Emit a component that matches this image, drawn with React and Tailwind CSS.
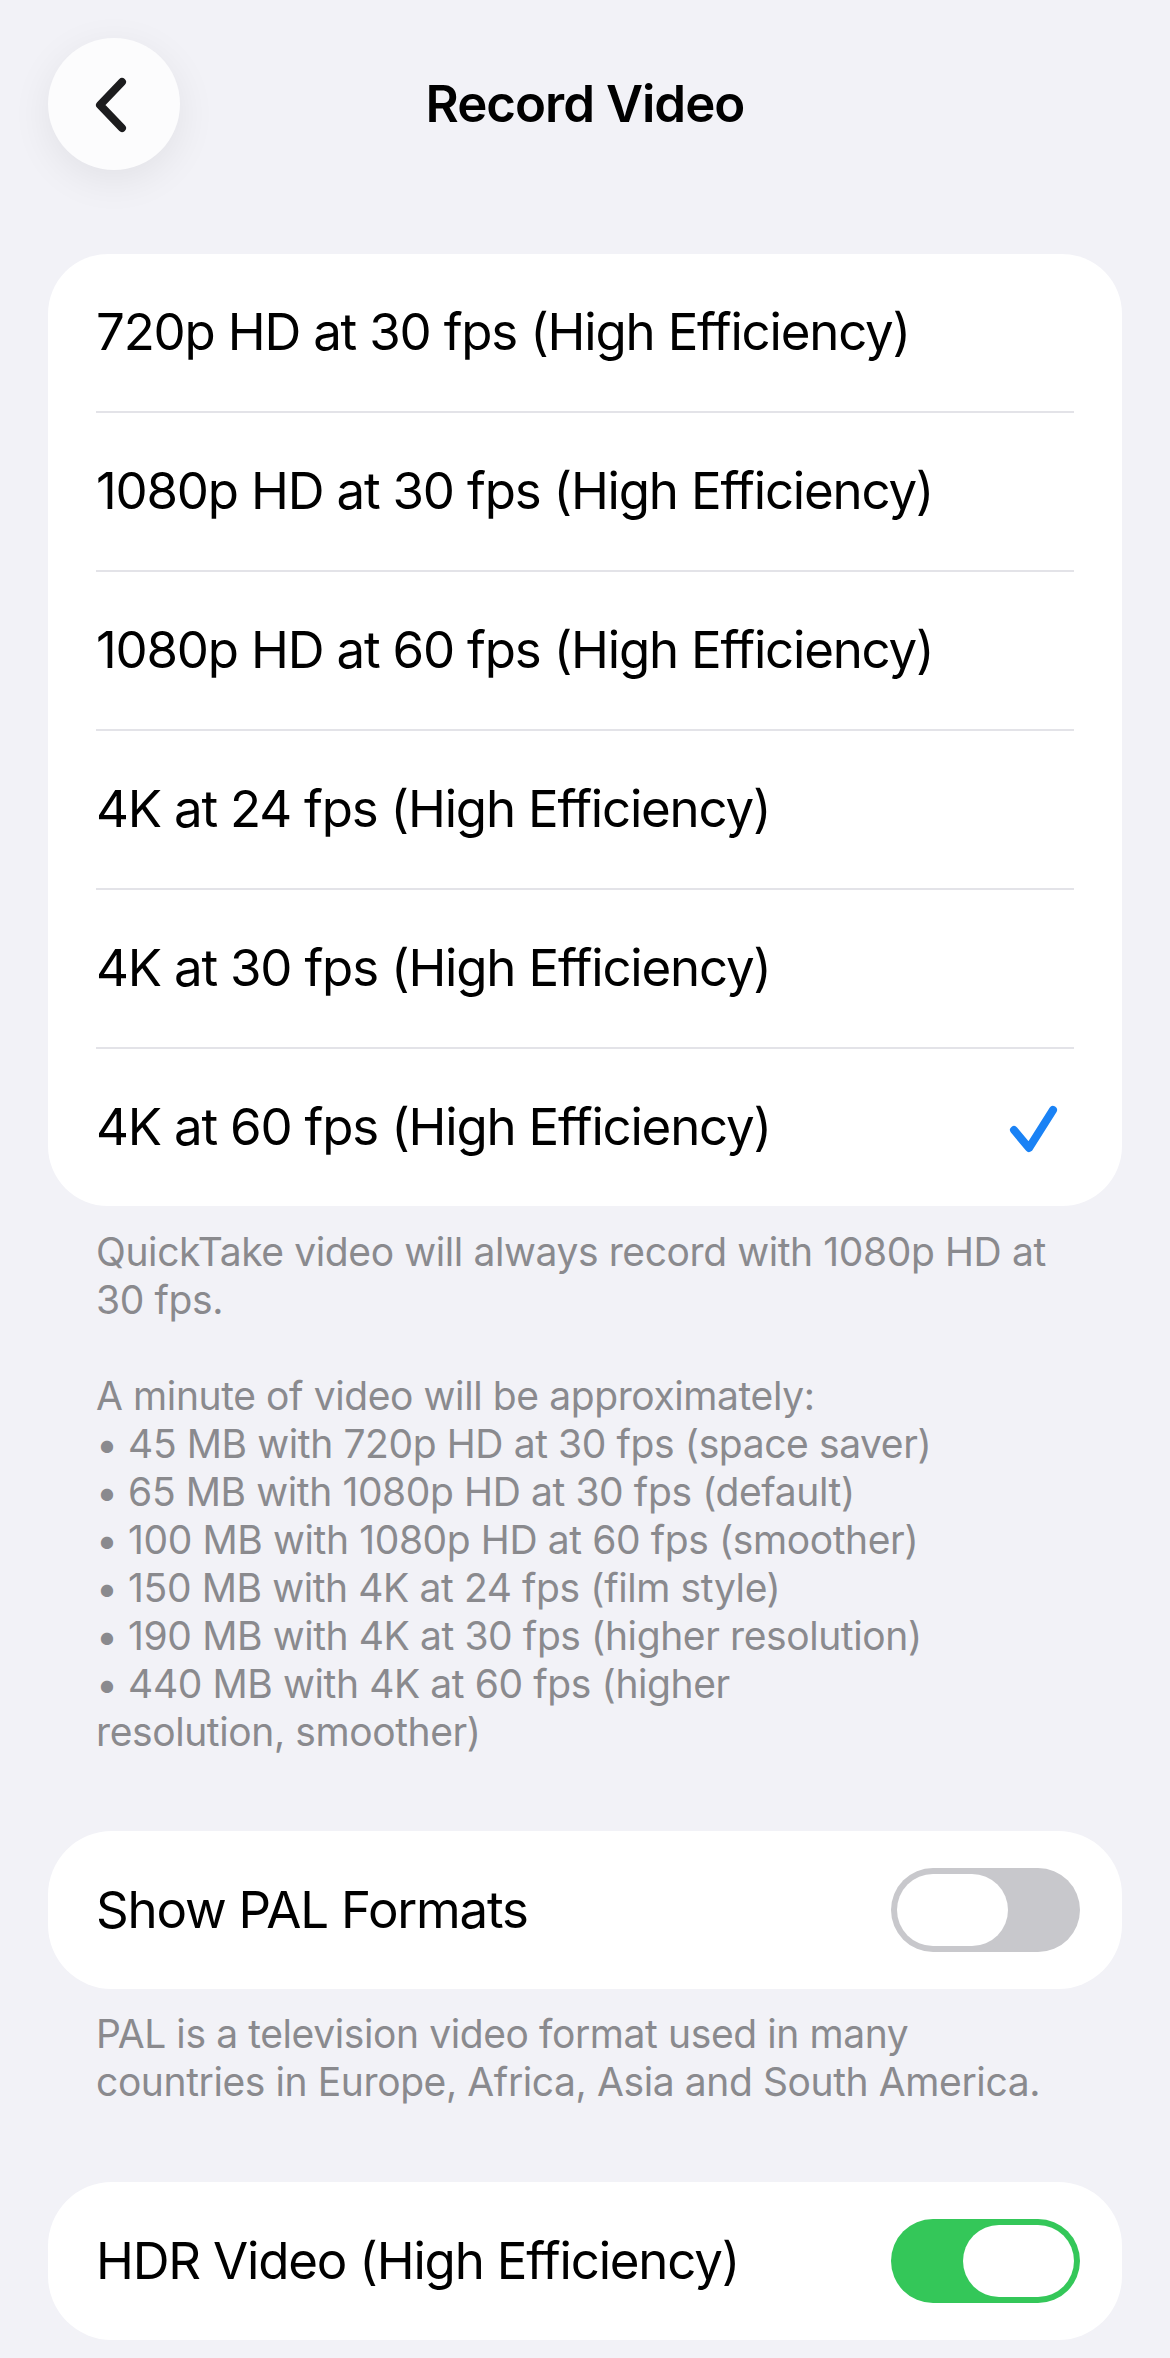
import React from "react";

const formats = [
  "720p HD at 30 fps (High Efficiency)",
  "1080p HD at 30 fps (High Efficiency)",
  "1080p HD at 60 fps (High Efficiency)",
  "4K at 24 fps (High Efficiency)",
  "4K at 30 fps (High Efficiency)",
  "4K at 60 fps (High Efficiency)",
];

const sizes = [
  "• 45 MB with 720p HD at 30 fps (space saver)",
  "• 65 MB with 1080p HD at 30 fps (default)",
  "• 100 MB with 1080p HD at 60 fps (smoother)",
  "• 150 MB with 4K at 24 fps (film style)",
  "• 190 MB with 4K at 30 fps (higher resolution)",
  "• 440 MB with 4K at 60 fps (higher",
  "resolution, smoother)",
];

function Toggle({ on }) {
  return (
    <div
      className={`flex h-[84px] w-[189px] items-center rounded-full p-[6px] ${
        on ? "justify-end bg-[#34c759]" : "justify-start bg-[#c8c8cc]"
      }`}
    >
      <div className="h-[72px] w-[111px] rounded-full bg-white" />
    </div>
  );
}

function Check() {
  return (
    <svg width="60" height="60" viewBox="0 0 60 60" fill="none">
      <path
        d="M12 32 L27 50 L51 12"
        stroke="#1a82f5"
        strokeWidth="8"
        strokeLinecap="round"
        strokeLinejoin="round"
      />
    </svg>
  );
}

export default function App() {
  const font = { fontFamily: "Inter, 'Liberation Sans', sans-serif" };
  return (
    <div className="min-h-[2358px] w-[1170px] bg-[#f2f2f7] text-black" style={font}>
      {/* header */}
      <div className="flex items-center px-[48px] pt-[38px]">
        <button className="flex h-[132px] w-[132px] items-center justify-center rounded-full bg-[#fcfcfd] shadow-[0_10px_40px_rgba(0,0,0,0.07)]">
          <svg width="60" height="60" viewBox="0 0 60 60" fill="none">
            <path
              d="M38 8 L16 31 L38 54"
              stroke="#1c1c1e"
              strokeWidth="8"
              strokeLinecap="round"
              strokeLinejoin="round"
            />
          </svg>
        </button>
        <h1 className="flex-1 text-center text-[51px] font-semibold tracking-[-1px]">
          Record Video
        </h1>
        <div className="w-[132px]" />
      </div>

      {/* formats list */}
      <div className="mx-[48px] mt-[84px] rounded-[60px] bg-white">
        {formats.map((f, i) => (
          <div key={f}>
            {i > 0 && <div className="mx-[48px] h-[2px] bg-[#e3e3e8]" />}
            <div className="flex h-[157px] items-center justify-between pl-[48px] pr-[60px]">
              <span className="text-[51px] tracking-[-1.2px]">{f}</span>
              {i === formats.length - 1 && <Check />}
            </div>
          </div>
        ))}
      </div>

      <div className="mt-[22px] px-[96px] text-[39px] leading-[48px] tracking-[-0.4px] text-[#8a8a8e]">
        <p>
          QuickTake video will always record with 1080p HD at
          <br />
          30 fps.
        </p>
        <p className="mt-[48px]">A minute of video will be approximately:</p>
        {sizes.map((s) => (
          <p key={s}>{s}</p>
        ))}
      </div>

      {/* PAL */}
      <div className="mx-[48px] mt-[75px] flex h-[158px] items-center justify-between rounded-[64px] bg-white pl-[48px] pr-[42px]">
        <span className="text-[51px] tracking-[-1.2px]">Show PAL Formats</span>
        <Toggle on={false} />
      </div>
      <div className="mt-[21px] px-[96px] text-[39px] leading-[48px] tracking-[-0.4px] text-[#8a8a8e]">
        <p>
          PAL is a television video format used in many
          <br />
          countries in Europe, Africa, Asia and South America.
        </p>
      </div>

      {/* HDR */}
      <div className="mx-[48px] mt-[76px] flex h-[158px] items-center justify-between rounded-[64px] bg-white pl-[48px] pr-[42px]">
        <span className="text-[51px] tracking-[-1.2px]">HDR Video (High Efficiency)</span>
        <Toggle on={true} />
      </div>
    </div>
  );
}
